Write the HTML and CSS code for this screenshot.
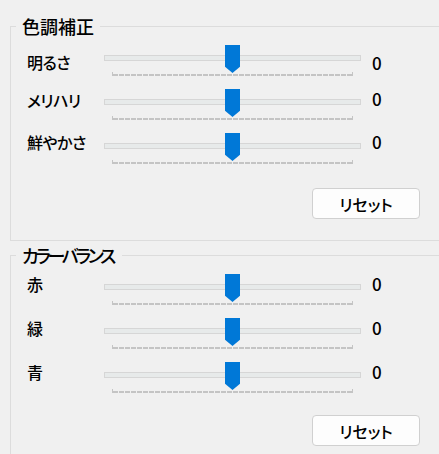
FILE: index.html
```html
<!DOCTYPE html>
<html lang="ja">
<head>
<meta charset="UTF-8">
<meta name="viewport" content="width=device-width, initial-scale=1.0">
<title>色調補正</title>
<link rel="stylesheet" href="styles.css">
</head>
<body>
<fieldset class="group">
    <legend class="group-title">色調補正</legend>
    <div class="group-body">
        <div class="adjust-row adjust-row-low">
            <span class="adjust-label">明るさ</span>
            <div class="slider"><div class="slider-track"></div><div class="slider-ticks"></div><div class="slider-thumb"></div></div>
            <span class="adjust-value">0</span>
        </div>
        <div class="adjust-row adjust-row-mid">
            <span class="adjust-label">メリハリ</span>
            <div class="slider"><div class="slider-track"></div><div class="slider-ticks"></div><div class="slider-thumb"></div></div>
            <span class="adjust-value">0</span>
        </div>
        <div class="adjust-row adjust-row-high">
            <span class="adjust-label">鮮やかさ</span>
            <div class="slider"><div class="slider-track"></div><div class="slider-ticks"></div><div class="slider-thumb"></div></div>
            <span class="adjust-value">0</span>
        </div>
        <div class="group-actions">
            <button type="button" class="reset-button">リセット</button>
        </div>
    </div>
</fieldset>

<fieldset class="group group-balance">
    <legend class="group-title group-title-kana">カラーバランス</legend>
    <div class="group-body">
        <div class="adjust-row">
            <span class="adjust-label">赤</span>
            <div class="slider"><div class="slider-track"></div><div class="slider-ticks"></div><div class="slider-thumb"></div></div>
            <span class="adjust-value">0</span>
        </div>
        <div class="adjust-row">
            <span class="adjust-label">緑</span>
            <div class="slider"><div class="slider-track"></div><div class="slider-ticks"></div><div class="slider-thumb"></div></div>
            <span class="adjust-value">0</span>
        </div>
        <div class="adjust-row">
            <span class="adjust-label">青</span>
            <div class="slider"><div class="slider-track"></div><div class="slider-ticks"></div><div class="slider-thumb"></div></div>
            <span class="adjust-value">0</span>
        </div>
        <div class="group-actions group-actions-tight">
            <button type="button" class="reset-button">リセット</button>
        </div>
    </div>
</fieldset>
</body>
</html>
```

FILE: styles.css
```css
body {
    margin: 0;
    background-color: #f0f0f0;
    color: #000;
    font-family: "Noto Sans CJK JP", sans-serif;
    font-feature-settings: "palt";
    overflow: hidden;
}
.group {
    width: 460px;
    min-width: 0;
    margin: 16px 0 0 10px;
    padding: 0 0 21px 16px;
    border: 1px solid #dcdcdc;
}
.group-balance {
    margin-top: 4px;
}
.group-title {
    margin-left: -11px;
    padding: 0 6px;
    font-size: 18px;
    line-height: 20px;
    font-weight: 500;
}
.group-title-kana {
    letter-spacing: -3.3px;
    padding-right: 9px;
}
.group-body {
    width: 393px;
    padding-top: 9px;
    display: flex;
    flex-direction: column;
    gap: 10px;
}
.adjust-row {
    display: grid;
    grid-template-columns: 66px 257px auto;
    column-gap: 11px;
    align-items: start;
    height: 34px;
}
.adjust-label {
    margin-top: -2px;
    font-size: 16px;
    line-height: 24px;
    font-weight: 500;
    letter-spacing: -0.5px;
}
.adjust-value {
    margin-top: -2px;
    font-size: 17px;
    line-height: 24px;
    font-weight: 500;
}
/* labels in the first group sit on their own spacing */
.adjust-row-low .adjust-label {
    margin-top: 5px;
}
.adjust-row-low .adjust-value {
    margin-top: 6px;
}
.adjust-row-mid .adjust-label {
    margin-top: -1px;
}
.adjust-row-mid .adjust-value {
    margin-top: -2px;
}
.adjust-row-high .adjust-label,
.adjust-row-high .adjust-value {
    margin-top: -3px;
}
.slider {
    position: relative;
    height: 34px;
}
.slider-track {
    margin-top: 10px;
    height: 6px;
    box-sizing: border-box;
    border: 1px solid #d6d6d6;
    background-color: #e7eaea;
}
.slider-ticks {
    margin: 11px 8px 0;
    height: 4px;
    border-left: 1px solid #c4c4c4;
    border-right: 1px solid #c4c4c4;
    background-image: repeating-linear-gradient(90deg, #c4c4c4 0 5px, transparent 5px 6px);
    background-size: 100% 2px;
    background-position: left bottom;
    background-repeat: no-repeat;
}
.slider-thumb {
    position: absolute;
    top: 0;
    left: 121px;
    width: 15px;
    height: 28px;
    background-color: #0078d7;
    clip-path: polygon(0 0, 100% 0, 100% 78%, 50% 100%, 0 78%);
}
.group-actions {
    display: flex;
    justify-content: flex-end;
    margin-top: 11px;
}
.group-actions-tight {
    margin-top: 9px;
}
.reset-button {
    width: 108px;
    height: 31px;
    padding: 0;
    border: 1px solid #d0d0d0;
    border-radius: 4px;
    background-color: #fdfdfd;
    color: #000;
    font-family: inherit;
    font-feature-settings: "palt";
    font-size: 16px;
    font-weight: 500;
    cursor: pointer;
}
```
